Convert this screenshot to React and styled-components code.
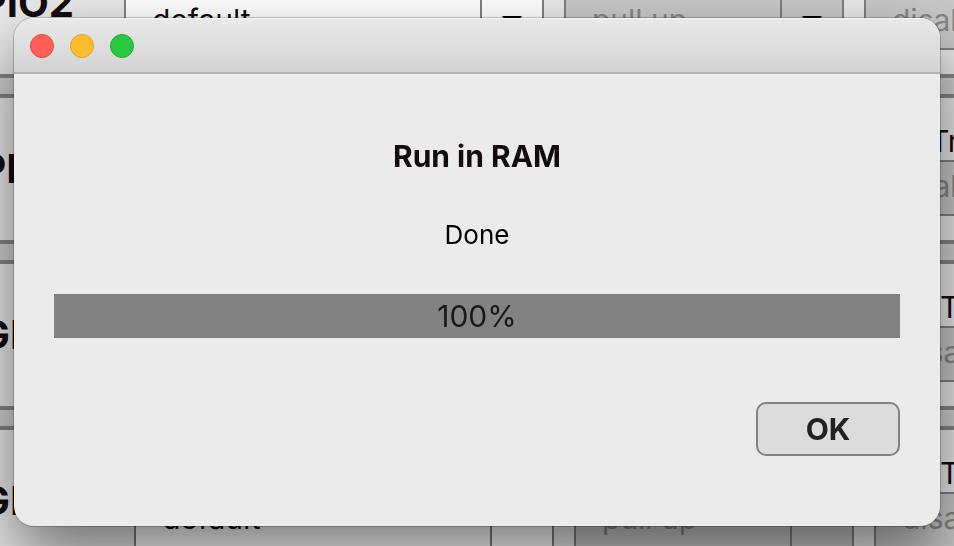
import React, { useState } from 'react'
import styled, { createGlobalStyle } from 'styled-components'

const GlobalStyle = createGlobalStyle`
  * {
    box-sizing: border-box;
  }

  body {
    margin: 0;
    overflow: hidden;
    background-color: #d0d0d0;
    color: #140b0f;
    font-family: Inter, 'Liberation Sans', sans-serif;
  }
`

const Page = styled.main`
  height: 100vh;
  overflow: hidden;
`

// the list is scrolled down and to the right behind the dialog
const PinList = styled.div`
  display: flex;
  flex-direction: column;
  gap: 16px;
  margin: -72px -240px 0 -80px;
`

const PinPanel = styled.section`
  display: grid;
  grid-template-columns: ${(props) => (props.$wide ? '190px' : '180px')} 420px 280px 280px;
  column-gap: 20px;
  height: 150px;
  border: 4px solid #868686;
  background-color: #e9e9e9;
`

const PinName = styled.h2`
  margin: 0;
  padding-right: ${(props) => (props.$wide ? '36px' : '30px')};
  align-self: center;
  text-align: right;
  font-size: 40px;
  line-height: 48px;
  font-weight: 700;
`

const Field = styled.label`
  display: flex;
  flex-direction: column;
  padding-top: 24px;
  font-size: 30px;
  line-height: 38px;
`

const FieldName = styled.span`
  padding-left: ${(props) => (props.$indent ? '66px' : '0')};
`

const SelectBox = styled.span`
  display: flex;
  height: 56px;
  border: 2px solid #808080;
  background-color: ${(props) => (props.$disabled ? '#c8c8c8' : '#fff')};
`

const Select = styled.select`
  flex: 1;
  min-width: 0;
  appearance: none;
  border: none;
  outline: none;
  background: transparent;
  padding: 0 0 4px 26px;
  color: #140b0f;
  font-family: inherit;
  font-size: 30px;
  opacity: 1;

  &:disabled {
    color: #868686;
  }
`

const ArrowCell = styled.span`
  display: flex;
  justify-content: center;
  align-items: center;
  width: 62px;
  border-left: 2px solid #808080;
`

const Overlay = styled.div`
  position: fixed;
  inset: 0;
  padding: 18px 14px;
`

const Dialog = styled.div`
  border-radius: 20px;
  overflow: hidden;
  background-color: #ebebeb;
  box-shadow:
    0 0 0 1px rgba(0, 0, 0, 0.2),
    0 30px 64px rgba(0, 0, 0, 0.52);
`

const TitleBar = styled.header`
  display: flex;
  align-items: center;
  gap: 16px;
  height: 56px;
  padding: 0 16px;
  border-top: 1px solid #f6f6f6;
  border-bottom: 2px solid #b4b4b4;
  background: linear-gradient(#e9e9e9, #d3d3d3);
`

const WindowButton = styled.button`
  width: 24px;
  height: 24px;
  padding: 0;
  border: 1px solid ${(props) => props.$edge};
  border-radius: 50%;
  background-color: ${(props) => props.$bg};
`

const Content = styled.div`
  display: flex;
  flex-direction: column;
  align-items: center;
  padding: 64px 40px 70px;
`

const Title = styled.h1`
  margin: 0 0 44px;
  font-size: 30px;
  line-height: 36px;
  font-weight: 700;
`

const Message = styled.p`
  margin: 0 0 42px;
  color: #000;
  font-size: 26px;
  line-height: 34px;
`

const Progress = styled.div`
  width: 100%;
  margin-bottom: 64px;
  background: linear-gradient(#828282, #828282) no-repeat #dcdcdc;
  color: #1a1a1a;
  font-size: 30px;
  line-height: 44px;
  text-align: center;
`

const OkButton = styled.button`
  align-self: flex-end;
  width: 144px;
  height: 54px;
  padding: 0;
  border: 2px solid #828282;
  border-radius: 10px;
  background-color: #dcdcdc;
  color: #222;
  font-family: inherit;
  font-size: 30px;
  font-weight: 700;
`

const pins = [
  { id: 'a', name: 'GPIO2' },
  { id: 'b', name: 'GPIO3' },
  { id: 'c', name: 'GPIO', wide: true },
  { id: 'd', name: 'GPIO', wide: true },
]

const Dropdown = ({ name, value, disabled, indent }) => (
  <Field>
    <FieldName $indent={indent}>{name}</FieldName>
    <SelectBox $disabled={disabled}>
      <Select defaultValue={value} disabled={disabled}>
        <option>{value}</option>
      </Select>
      <ArrowCell>
        <svg width='20' height='12' viewBox='0 0 20 12' aria-hidden='true'>
          <path d='M0 0h20L10 12z' fill='#000' />
        </svg>
      </ArrowCell>
    </SelectBox>
  </Field>
)

const App = () => {
  const [open, setOpen] = useState(true)
  const percent = 100

  const close = () => setOpen(false)

  return (
    <Page>
      <GlobalStyle />
      <PinList>
        {pins.map((pin) => (
          <PinPanel key={pin.id} $wide={pin.wide}>
            <PinName $wide={pin.wide}>{pin.name}</PinName>
            <Dropdown name='Mode' value='default' />
            <Dropdown name='Pull' value='pull up' disabled />
            <Dropdown name='Trigger' value='disabled' disabled indent />
          </PinPanel>
        ))}
      </PinList>

      {open && (
        <Overlay>
          <Dialog role='dialog' aria-modal='true' aria-labelledby='dialog-title'>
            <TitleBar>
              <WindowButton
                $bg='#ff5f57'
                $edge='#e2463f'
                aria-label='Close'
                onClick={close}
              />
              <WindowButton $bg='#ffbd2e' $edge='#dfa023' aria-label='Minimize' />
              <WindowButton $bg='#28c941' $edge='#1dad2b' aria-label='Zoom' />
            </TitleBar>
            <Content>
              <Title id='dialog-title'>Run in RAM</Title>
              <Message>Done</Message>
              <Progress
                role='progressbar'
                aria-labelledby='dialog-title'
                aria-valuemin={0}
                aria-valuemax={100}
                aria-valuenow={percent}
                style={{ backgroundSize: `${percent}% 100%` }}
              >
                {percent}%
              </Progress>
              <OkButton onClick={close}>OK</OkButton>
            </Content>
          </Dialog>
        </Overlay>
      )}
    </Page>
  )
}

export default App
